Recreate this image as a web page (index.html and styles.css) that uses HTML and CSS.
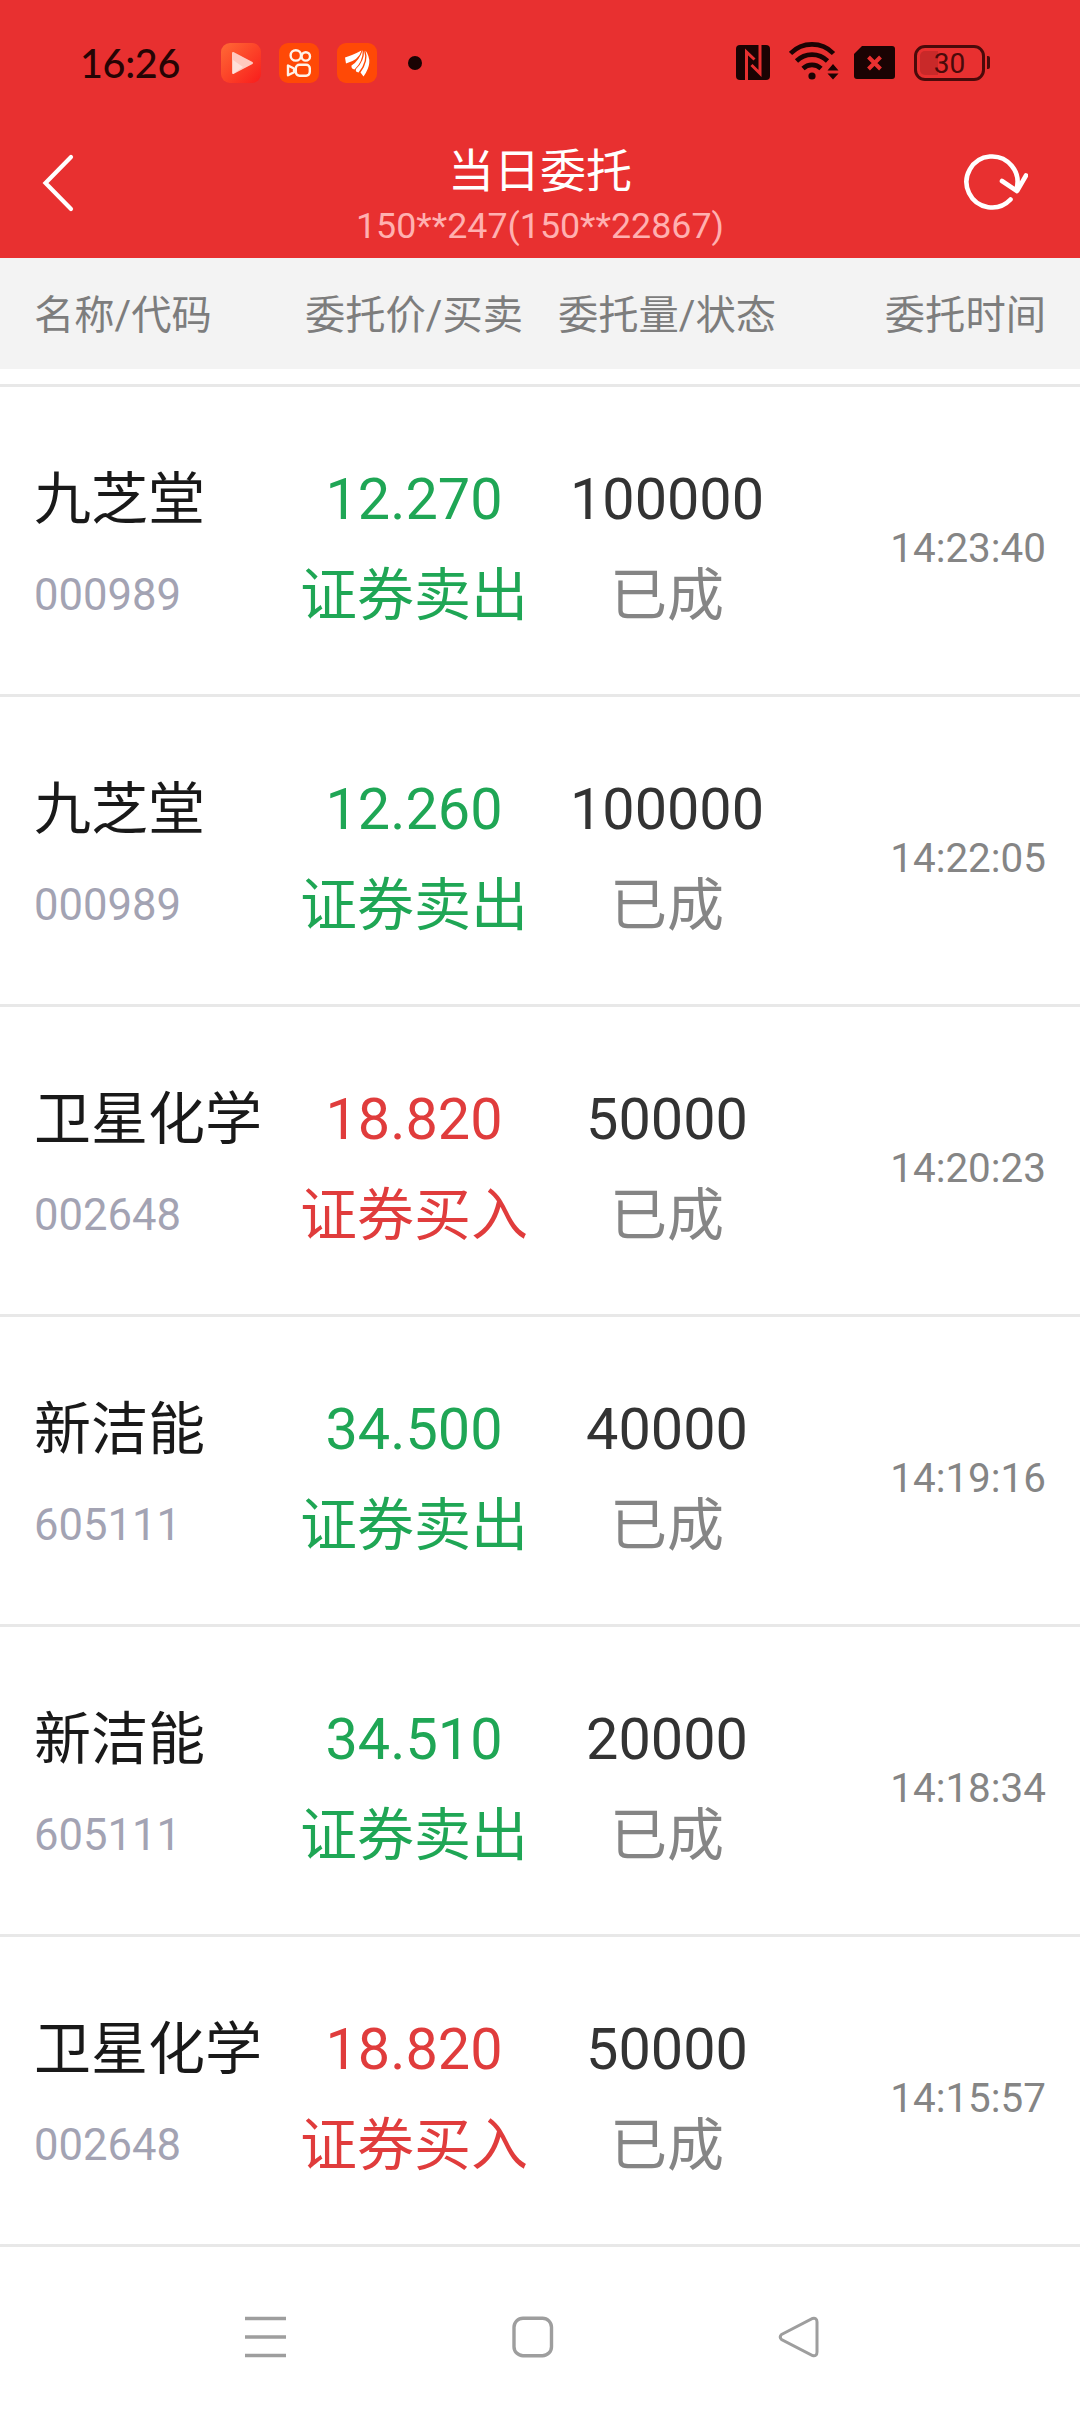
FILE: index.html
```html
<!DOCTYPE html>
<html lang="zh-CN">
<head>
  <meta charset="UTF-8">
  <meta name="viewport" content="width=device-width, initial-scale=1.0">
  <title>当日委托</title>
  <link rel="stylesheet" href="styles.css">
</head>
<body>

<header class="top">
  <div class="status-bar">
    <span class="clock">16:26</span>
    <div class="apps">
      <svg width="40" height="40" viewBox="0 0 40 40">
        <defs>
          <linearGradient id="play" x1="0" y1="0" x2="1" y2="1">
            <stop offset="0" stop-color="#ff6a35"/>
            <stop offset="1" stop-color="#f91c1c"/>
          </linearGradient>
        </defs>
        <rect width="40" height="40" rx="9" fill="url(#play)"/>
        <path d="M12 10v20l19-10z" fill="#ffc9bf" stroke="#ffc9bf" stroke-width="2" stroke-linejoin="round"/>
        <path d="M12 17l10 7-10 7z" fill="#ffe0da"/>
      </svg>
      <svg width="40" height="40" viewBox="0 0 40 40">
        <rect width="40" height="40" rx="9" fill="#ff4906"/>
        <g fill="none" stroke="#fff3ea" stroke-width="2.400" stroke-linejoin="round">
          <circle cx="16.800" cy="12.400" r="5.200"/>
          <circle cx="26.800" cy="13.400" r="4.200"/>
          <rect x="16.800" y="21.700" width="14" height="11" rx="3.600"/>
          <path d="M9 22.500v9.800l6-3v-3.800z"/>
        </g>
      </svg>
      <svg width="40" height="40" viewBox="0 0 40 40">
        <rect width="40" height="40" rx="9" fill="#ff4906"/>
        <g fill="#fff">
          <path d="M8 14.500Q15 12.500 24.500 7.500Q22 17 9 20.500Z"/>
          <path d="M25.800 7Q26 18.500 17.500 26.500Q14 26 14.500 22.500Q22 18 25.800 7Z"/>
          <path d="M27 7.500Q31 18 21.500 29.500Q18 29 19 26Q27.500 18 27 7.500Z"/>
          <path d="M28.500 7.500Q37 19 26.500 33.500L23.500 29.500Q32 18 28.500 7.500Z"/>
        </g>
      </svg>
    </div>
    <span class="dot"></span>
    <div class="signals">
      <svg class="nfc" width="34" height="35" viewBox="0 0 34 35">
        <rect width="34" height="35" rx="4" fill="#1a0303"/>
        <path d="M10.500 35V7L18.500 14.500M24 0V28.500L15.500 20" fill="none" stroke="#e83030" stroke-width="3"/>
      </svg>
      <svg class="wifi" width="50" height="38" viewBox="0 0 50 38">
        <g fill="none" stroke="#1a0303" stroke-width="4.600">
          <path d="M1.500 11.500a30 30 0 0 1 43 0"/>
          <path d="M7.500 19a22 22 0 0 1 31 0"/>
          <path d="M14 26.500a13 13 0 0 1 18 0"/>
        </g>
        <circle cx="23" cy="34" r="3.600" fill="#1a0303"/>
        <path d="M38.500 28.500l5.500-6.500 5.500 6.500zM38.500 31.500l5.500 6 5.500-6z" fill="#1a0303"/>
      </svg>
      <svg class="sim" width="41" height="34" viewBox="0 0 41 34">
        <path d="M8 0h30a3 3 0 0 1 3 3v27a3 3 0 0 1-3 3H3a3 3 0 0 1-3-3V8z" fill="#1a0303"/>
        <path d="M14.500 11l12 12M26.500 11l-12 12" stroke="#e83030" stroke-width="4"/>
      </svg>
      <div class="battery"><span class="level"></span><span class="percent">30</span></div>
    </div>
  </div>

  <div class="nav">
    <svg class="back" width="36" height="60" viewBox="0 0 36 60">
      <path d="M31 4L5.500 30 31 56" fill="none" stroke="#fff" stroke-width="4.200" stroke-linecap="round"/>
    </svg>
    <div class="heading">
      <h1>当日委托</h1>
      <p>150**247(150**22867)</p>
    </div>
    <svg class="refresh" width="68" height="60" viewBox="0 0 68 60">
      <g fill="none" stroke="#fff" stroke-width="4.600" stroke-linecap="round" stroke-linejoin="round">
        <path d="M50.500 46.500A25.500 25.500 0 1 1 56.500 36"/>
        <path d="M42 28l15 10 9-15.500"/>
      </g>
    </svg>
  </div>
</header>

<div class="columns">
  <span class="left">名称/代码</span>
  <span>委托价/买卖</span>
  <span>委托量/状态</span>
  <span class="right">委托时间</span>
</div>

<main class="orders">
  <div class="order sell">
    <div class="stock"><b>九芝堂</b><small>000989</small></div>
    <div class="price"><span>12.270</span><em>证券卖出</em></div>
    <div class="amount"><span>100000</span><em>已成</em></div>
    <time>14:23:40</time>
  </div>
  <div class="order sell">
    <div class="stock"><b>九芝堂</b><small>000989</small></div>
    <div class="price"><span>12.260</span><em>证券卖出</em></div>
    <div class="amount"><span>100000</span><em>已成</em></div>
    <time>14:22:05</time>
  </div>
  <div class="order buy">
    <div class="stock"><b>卫星化学</b><small>002648</small></div>
    <div class="price"><span>18.820</span><em>证券买入</em></div>
    <div class="amount"><span>50000</span><em>已成</em></div>
    <time>14:20:23</time>
  </div>
  <div class="order sell">
    <div class="stock"><b>新洁能</b><small>605111</small></div>
    <div class="price"><span>34.500</span><em>证券卖出</em></div>
    <div class="amount"><span>40000</span><em>已成</em></div>
    <time>14:19:16</time>
  </div>
  <div class="order sell">
    <div class="stock"><b>新洁能</b><small>605111</small></div>
    <div class="price"><span>34.510</span><em>证券卖出</em></div>
    <div class="amount"><span>20000</span><em>已成</em></div>
    <time>14:18:34</time>
  </div>
  <div class="order buy">
    <div class="stock"><b>卫星化学</b><small>002648</small></div>
    <div class="price"><span>18.820</span><em>证券买入</em></div>
    <div class="amount"><span>50000</span><em>已成</em></div>
    <time>14:15:57</time>
  </div>
</main>

<footer class="system-nav">
  <svg width="42" height="44" viewBox="0 0 42 44">
    <path d="M0 3.500h41M0 22h41M0 40.500h41" stroke="#9e9e9e" stroke-width="3.500"/>
  </svg>
  <svg width="42" height="44" viewBox="0 0 42 44">
    <rect x="2" y="3.200" width="37.500" height="37.500" rx="9" fill="none" stroke="#9e9e9e" stroke-width="3.400"/>
  </svg>
  <svg width="42" height="44" viewBox="0 0 42 44">
    <path d="M3.500 19.500L34.500 3.500Q39 2.500 39 7V37Q39 41.500 34.500 40.500L3.500 24.500Q1 22 3.500 19.500Z" fill="none" stroke="#9e9e9e" stroke-width="3"/>
  </svg>
</footer>

</body>
</html>
```
FILE: styles.css
```css
* {
  box-sizing: border-box;
}
body {
  margin: 0;
  width: 1080px;
  height: 2412px;
  display: flex;
  flex-direction: column;
  background: #fff;
  font-family: Roboto, "Noto Sans CJK SC", sans-serif;
  overflow: hidden;
}
svg {
  display: block;
  flex: none;
}

/* header */
.top {
  height: 258px;
  background: #e83030;
}
.status-bar {
  display: flex;
  align-items: center;
  height: 125px;
  padding: 0 90px 0 80px;
}
.clock {
  width: 141px;
  font-family: Lato, sans-serif;
  font-size: 39.5px;
  font-weight: 500;
  letter-spacing: -0.3px;
  color: #260404;
}
.apps {
  display: flex;
  gap: 18px;
}
.dot {
  width: 14px;
  height: 14px;
  margin-left: 31px;
  border-radius: 50%;
  background: #1a0303;
}
.signals {
  display: flex;
  align-items: center;
  margin-left: auto;
}
.wifi {
  margin-left: 19px;
  margin-top: -3px;
}
.sim {
  margin-left: 15px;
}
.battery {
  position: relative;
  width: 71px;
  height: 36px;
  margin: 0 5px 0 19px;
  border: 3px solid #4a0a0a;
  border-radius: 11px;
  text-align: center;
}
.battery::after {
  content: "";
  position: absolute;
  right: -8px;
  top: 8px;
  width: 3px;
  height: 13px;
  border-radius: 0 2px 2px 0;
  background: #4a0a0a;
}
.level {
  position: absolute;
  left: 3px;
  top: 3px;
  width: 18px;
  height: 24px;
  border-radius: 5px 0 0 5px;
  background: #c92929;
}
.percent {
  position: relative;
  display: block;
  font-size: 28px;
  line-height: 31px;
  color: #4a0a0a;
}
.nav {
  display: flex;
  justify-content: space-between;
  height: 133px;
  padding: 28px 52px 0 40px;
}
.heading {
  margin-left: 44px;
  text-align: center;
}
.heading h1 {
  margin: -12px 0 0;
  font-size: 46px;
  font-weight: 400;
  line-height: 60px;
  color: #fff;
}
.heading p {
  margin: 0;
  font-size: 35.8px;
  line-height: 50px;
  color: #ffb0b0;
}

/* table */
.columns,
.order {
  display: grid;
  grid-template-columns: 254px 252px 254px 1fr;
  align-items: center;
  padding: 0 34px;
}
.columns {
  height: 111px;
  padding-bottom: 5px;
  background: #f3f3f3;
  font-size: 40.3px;
  color: #7d7d7d;
  text-align: center;
}
.columns .left {
  text-align: left;
}
.columns .right {
  text-align: right;
}
.orders {
  margin-top: 15px;
  border-top: 3px solid #e8e8e8;
}
.order {
  height: 310px;
  padding-top: 15px;
  border-bottom: 3px solid #e8e8e8;
  font-size: 57.6px;
  line-height: 96px;
}
.order div {
  display: flex;
  flex-direction: column;
  white-space: nowrap;
}
.stock b {
  font-size: 57px;
  font-weight: 400;
  color: #191919;
}
.stock small {
  font-size: 43.6px;
  color: #a3a3b3;
}
.price,
.amount {
  text-align: center;
}
.sell .price {
  color: #1fa655;
}
.buy .price {
  color: #e03c3c;
}
.amount {
  color: #333;
}
.order em {
  font-size: 57px;
  font-style: normal;
}
.amount em {
  color: #858585;
}
.order time {
  padding-top: 1px;
  font-size: 40.4px;
  text-align: right;
  color: #858585;
}

/* android buttons */
.system-nav {
  flex: 1;
  display: flex;
  justify-content: space-between;
  padding: 68px 260px 0 245px;
}
```
